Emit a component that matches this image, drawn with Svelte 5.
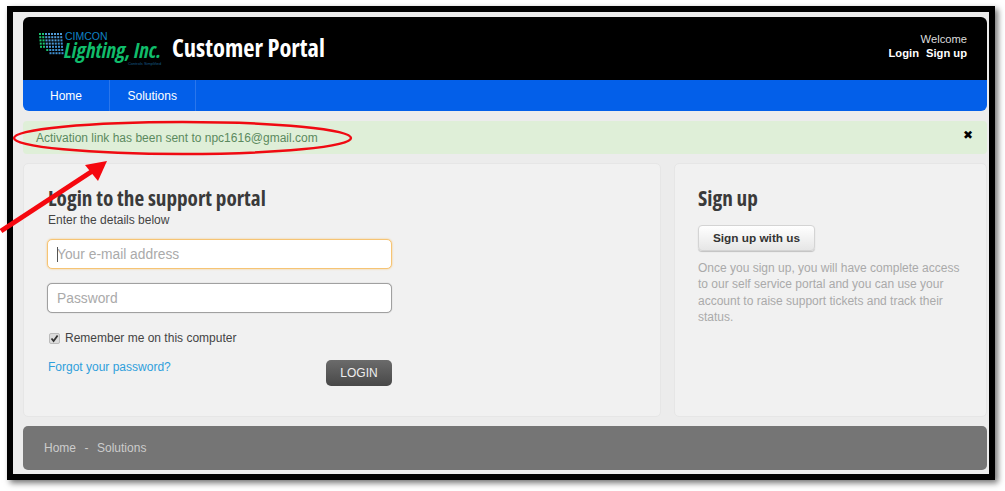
<script lang="ts">
// LED grid of the logo: [column, row, colour]
const dots: [number, number, string][] = [];
for (let r = 0; r < 7; r++) {
	for (let c = 0; c < 8; c++) {
		if (c < r - 3 && r > 4) continue;
		const colour = c + r > 7 ? "#3f8fd0" : c < 2 || r > 4 ? "#19c46e" : "#4f9ad6";
		dots.push([c, r, colour]);
	}
}
</script>

<div class="frame">
	<div class="page">
		<header class="top">
			<div class="brand">
				<div class="logo">
					<svg class="grid" width="26" height="24" viewBox="0 0 26 24" aria-hidden="true">
						{#each dots as [c, r, colour]}
							<rect x={c * 3 + 1 + r * 0.25} y={r * 3.2 + 1} width="2" height="2" fill={colour} />
						{/each}
					</svg>
					<div class="logo-text">
						<span class="cimcon">CIMCON</span>
						<span class="lighting">Lighting, Inc.</span>
						<span class="tag">Controls Simplified</span>
					</div>
				</div>
				<h1>Customer Portal</h1>
			</div>
			<div class="account">
				<div>Welcome</div>
				<div class="links"><a href="#login">Login</a><a href="#signup">Sign up</a></div>
			</div>
		</header>

		<nav>
			<a href="#home">Home</a>
			<a href="#solutions">Solutions</a>
		</nav>

		<div class="alert">
			<span>Activation link has been sent to npc1616@gmail.com</span>
			<span class="close">✖</span>
		</div>

		<main>
			<section class="login">
				<h2>Login to the support portal</h2>
				<p class="sub">Enter the details below</p>
				<div class="field focus"><span class="caret"></span>Your e-mail address</div>
				<div class="field">Password</div>
				<label class="remember">
					<span class="check">
						<svg width="9" height="9" viewBox="0 0 9 9" aria-hidden="true">
							<path d="M1.5 4.5 L3.6 7 L7.6 1.5" fill="none" stroke="#333" stroke-width="1.8" />
						</svg>
					</span>
					Remember me on this computer
				</label>
				<div class="actions">
					<a href="#forgot">Forgot your password?</a>
					<button type="button" class="btn-login">LOGIN</button>
				</div>
			</section>
			<section class="signup">
				<h2>Sign up</h2>
				<button type="button" class="btn-signup">Sign up with us</button>
				<p>Once you sign up, you will have complete access to our self service portal and you can use your account to raise support tickets and track their status.</p>
			</section>
		</main>

		<footer>
			<a href="#home">Home</a><span>-</span><a href="#solutions">Solutions</a>
		</footer>
	</div>

	<!-- annotation drawn over the screenshot -->
	<svg class="markup" width="1005" height="491" viewBox="0 0 1005 491" aria-hidden="true">
		<ellipse cx="182.5" cy="138" rx="168.5" ry="16" fill="none" stroke="#f00a12" stroke-width="2.4" />
		<path d="M1 231 L94 170" stroke="#f5080f" stroke-width="5" fill="none" />
		<path d="M107 161 L85 165 L98 181 Z" fill="#f5080f" />
	</svg>
</div>

<style>
	:global(body) {
		margin: 0;
		background: #fff;
	}

	.frame {
		position: relative;
		width: 1005px;
		height: 491px;
		padding: 6px 10px 11px 7px;
		box-sizing: border-box;
		font-family: "Liberation Sans", Arial, sans-serif;
		overflow: hidden;
	}

	.page {
		height: 474px;
		box-sizing: border-box;
		border: 6px solid #000;
		background: #ececec;
		padding: 5px 2px 4px 10px;
		box-shadow: 3px 3px 6px rgba(0, 0, 0, 0.55);
		display: flex;
		flex-direction: column;
	}

	.top {
		height: 63px;
		background: #000;
		border-radius: 6px 6px 0 0;
		display: flex;
		justify-content: space-between;
		color: #fff;
		flex: none;
	}

	.brand {
		display: flex;
		align-items: flex-start;
	}

	.logo {
		display: flex;
		margin: 15px 0 0 15px;
		width: 134px;
	}

	.grid {
		flex: none;
	}

	.logo-text {
		display: flex;
		flex-direction: column;
		line-height: 1;
	}

	.cimcon {
		color: #0f82c4;
		font-size: 10.5px;
		margin-left: 1px;
		line-height: 8px;
	}

	.lighting {
		color: #10bd6b;
		font-family: "Open Sans", sans-serif;
		font-style: italic;
		font-weight: 700;
		font-size: 21.2px;
		font-stretch: condensed;
		line-height: 19px;
		white-space: nowrap;
	}

	.tag {
		color: #155a8a;
		font-size: 4px;
		line-height: 5px;
		margin-top: 2px;
		text-align: right;
		white-space: nowrap;
	}

	h1 {
		margin: 15px 0 0 0;
		font-family: "Open Sans", sans-serif;
		font-stretch: condensed;
		font-size: 24.5px;
		line-height: 32px;
		font-weight: 700;
		white-space: nowrap;
	}

	.account {
		text-align: right;
		font-size: 11.2px;
		line-height: 14px;
		padding: 15px 20px 0 0;
		color: #ddd;
	}

	.links {
		font-weight: 700;
		color: #fff;
	}

	.links a {
		color: inherit;
		text-decoration: none;
		margin-left: 7px;
	}

	nav {
		height: 31px;
		flex: none;
		background: #035fe9;
		border-radius: 0 0 6px 6px;
		display: flex;
	}

	nav a {
		color: #fff;
		font-size: 12px;
		line-height: 30px;
		text-decoration: none;
		padding: 1px 26.5px 0 27px;
		border-right: 1px solid #2a76ec;
	}

	nav a + a {
		padding: 1px 18px 0;
	}

	.alert {
		margin-top: 10px;
		height: 33px;
		flex: none;
		background: #dfefd8;
		border-radius: 4px;
		color: #5b8a5e;
		font-size: 12px;
		display: flex;
		justify-content: space-between;
		align-items: center;
		padding: 0 14px 0 13px;
		box-sizing: border-box;
	}

	.close {
		color: #000;
		font-size: 12px;
		font-family: "DejaVu Sans", sans-serif;
		margin-top: -6px;
	}

	main {
		margin-top: 9px;
		height: 254px;
		flex: none;
		display: flex;
		gap: 13px;
	}

	section {
		background: #f1f1f1;
		border: 1px solid #e6e6e6;
		border-radius: 5px;
		box-sizing: border-box;
		padding: 20px 23px;
	}

	.login {
		width: 638px;
		padding-left: 24px;
	}

	.signup {
		width: 313px;
	}

	h2 {
		margin: 0;
		font-family: "Open Sans", sans-serif;
		font-stretch: condensed;
		font-size: 21.2px;
		line-height: 27px;
		font-weight: 700;
		color: #3a3a3a;
	}

	.sub {
		margin: 1px 0 11px;
		font-size: 12px;
		line-height: 16px;
		color: #444;
	}

	.field {
		position: relative;
		width: 345px;
		height: 30px;
		box-sizing: border-box;
		background: #fff;
		border: 1px solid #a0a0a0;
		border-radius: 5px;
		margin: 0 0 14px -1px;
		padding-left: 9px;
		font-size: 13.8px;
		line-height: 29px;
		color: #aaa;
		box-shadow: 0 0 1px #a0a0a0;
	}

	.focus {
		border-color: #f6c474;
		box-shadow: 0 0 2px #f6c474;
	}

	.caret {
		position: absolute;
		left: 9px;
		top: 7px;
		width: 1px;
		height: 15px;
		background: #555;
	}

	.remember {
		display: flex;
		align-items: center;
		gap: 5px;
		font-size: 12px;
		color: #444;
		margin: 0 0 0 1px;
		height: 22px;
	}

	.check {
		width: 11px;
		height: 11px;
		box-sizing: border-box;
		border: 1px solid #bbb;
		border-radius: 2px;
		background: #dcdcdc;
		display: flex;
		align-items: center;
		justify-content: center;
	}

	.actions {
		width: 344px;
		display: flex;
		justify-content: space-between;
		align-items: flex-start;
		margin-top: 10px;
	}

	.actions a {
		color: #2f9fdc;
		font-size: 12px;
		line-height: 16px;
		text-decoration: none;
	}

	.btn-login {
		margin-top: 1px;
		width: 66px;
		height: 26px;
		border: 0;
		border-radius: 5px;
		background: linear-gradient(#6b6b6b, #484848);
		color: #eee;
		font-family: inherit;
		font-size: 12px;
		padding: 0;
	}

	.btn-signup {
		display: block;
		margin-top: 14px;
		width: 117px;
		height: 26px;
		border: 1px solid #d4d4d4;
		border-radius: 4px;
		background: linear-gradient(#fff, #e6e6e6);
		box-shadow: 0 1px 1px rgba(0, 0, 0, 0.2);
		color: #333;
		font-family: inherit;
		font-size: 11.8px;
		font-weight: 700;
		padding: 0;
	}

	.signup p {
		margin: 9px 0 0;
		font-size: 12px;
		line-height: 16.3px;
		color: #aaa;
	}

	footer {
		margin-top: 9px;
		height: 44px;
		flex: none;
		background: #757575;
		border-radius: 5px;
		display: flex;
		align-items: center;
		padding-left: 21px;
		font-size: 12px;
		color: #ccc;
	}

	footer a {
		color: #ccc;
		text-decoration: none;
	}

	footer span {
		margin: 0 8.5px;
	}

	.markup {
		position: absolute;
		left: 0;
		top: 0;
		pointer-events: none;
	}
</style>
